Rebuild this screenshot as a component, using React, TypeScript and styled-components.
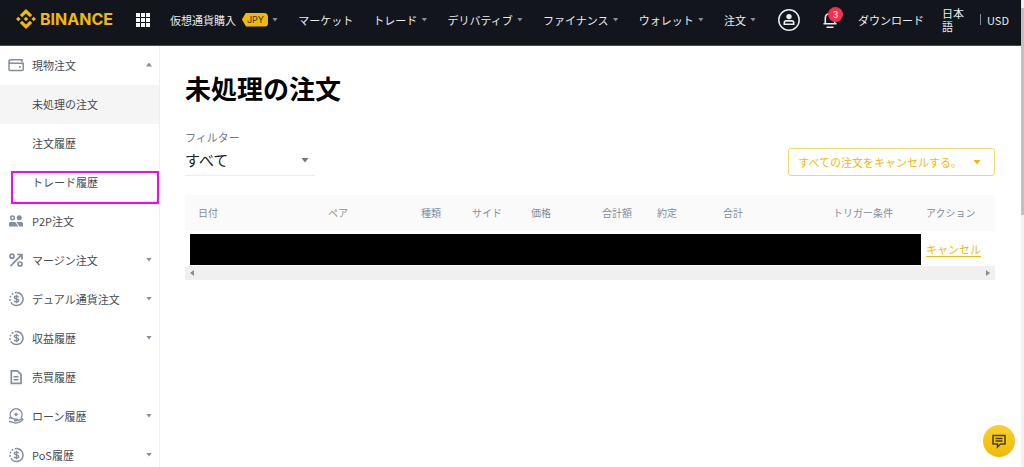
import React from "react";
import styled, { createGlobalStyle, css } from "styled-components";

const GlobalStyle = createGlobalStyle`
  *, *::before, *::after { box-sizing: border-box; }
  html, body, #root { height: 100%; }
  body {
    margin: 0;
    overflow: hidden;
    background: #fff;
    color: #474d57;
    font: 400 11px/16px "Noto Sans CJK JP", "Noto Sans", sans-serif;
  }
  button, select { font: inherit; }
  a { color: inherit; text-decoration: none; }
`;

const Window = styled.div`
  display: flex;
  height: 100%;
`;

const Page = styled.div`
  flex: 1;
  min-width: 0;
  display: flex;
  flex-direction: column;
  overflow: hidden;
`;

const ScrollTrack = styled.div`
  width: 3px;
  padding-top: 8px;
  background: #f1f1f1;
`;

const ScrollThumb = styled.div`
  height: 45%;
  background: #c1c1c1;
`;

const Header = styled.header`
  flex: none;
  display: flex;
  align-items: center;
  height: 46px;
  padding: 0 12px 6px 16px;
  background: #12161c;
  border-bottom: 1px solid #4a4d52;
  color: #eaecef;
`;

const Brand = styled.a`
  display: flex;
  align-items: center;
  gap: 4px;
  padding-bottom: 2px;
  color: #f0b90b;
  font: 700 16px/20px Inter, sans-serif;
`;

const IconButton = styled.button`
  position: relative;
  display: flex;
  padding: 0;
  border: 0;
  background: none;
  color: inherit;
  cursor: pointer;
`;

const AppsButton = styled(IconButton)`
  margin: 0 20px 0 23px;
`;

const Nav = styled.nav`
  flex: 1;
  display: flex;
  justify-content: space-between;
`;

const NavLink = styled.a`
  display: flex;
  align-items: center;
  gap: 4px;
  white-space: nowrap;
`;

const Currency = styled.span`
  margin-left: 2px;
  padding: 0 4px 0 5px;
  border-radius: 4px;
  background: #f0b90b;
  clip-path: polygon(0 50%, 4px 0, 100% 0, 100% 100%, 4px 100%);
  color: #3c3520;
  font: 400 9px/14px Inter, sans-serif;
`;

const Caret = styled.i<{ $up?: boolean; $size?: number; $color?: string }>`
  flex: none;
  width: ${(p) => (p.$size ?? 3) * 2}px;
  height: ${(p) => (p.$size ?? 3) + 1}px;
  background: ${(p) => p.$color ?? "#848e9c"};
  clip-path: ${(p) =>
    p.$up ? "polygon(0 100%, 50% 0, 100% 100%)" : "polygon(0 0, 100% 0, 50% 100%)"};
`;

const Tools = styled.div`
  display: flex;
  align-items: center;
  margin-left: 22px;
`;

const BellButton = styled(IconButton)`
  margin: 0 20px 0 22px;
`;

const Badge = styled.span`
  position: absolute;
  top: -5px;
  right: -5px;
  width: 15px;
  height: 15px;
  border-radius: 50%;
  background: #f6304e;
  color: #fff;
  font: 400 9px/15px Inter, sans-serif;
  text-align: center;
`;

const Language = styled.a`
  width: 24px;
  margin: 0 14px 0 18px;
  line-height: 13px;
`;

const CurrencyLink = styled.a`
  padding-left: 7px;
  background: linear-gradient(#848e9c, #848e9c) left center / 1px 11px no-repeat;
  line-height: 16px;
`;

const Body = styled.div`
  flex: 1;
  display: flex;
  min-height: 0;
`;

const Sidebar = styled.aside`
  flex: none;
  width: 160px;
  border-right: 1px solid #eeeff1;
`;

const Menu = styled.ul`
  margin: 0;
  padding: 0;
  list-style: none;
`;

const MenuItem = styled.li<{ $active?: boolean; $marked?: boolean }>`
  position: relative;
  background: ${(p) => (p.$active ? "#f5f5f5" : "transparent")};
  ${(p) =>
    p.$marked &&
    css`
      &::after {
        content: "";
        position: absolute;
        inset: 8px 0 -2px 11px;
        border: 2px solid #ff00ff;
        pointer-events: none;
      }
    `}
`;

const MenuLink = styled.a`
  display: flex;
  align-items: center;
  height: 39px;
  padding: 0 7px 2px 8px;
`;

const MenuIcon = styled.span`
  display: flex;
  width: 24px;
  color: #848e9c;
`;

const MenuText = styled.span`
  flex: 1;
  white-space: nowrap;
`;

const Main = styled.main`
  flex: 1;
  min-width: 0;
  padding: 23px 26px 0 25px;
`;

const Title = styled.h1`
  margin: 0;
  color: #000;
  font-size: 26px;
  font-weight: 700;
  line-height: 38px;
`;

const Toolbar = styled.div`
  display: flex;
  justify-content: space-between;
  align-items: flex-end;
  margin: 22px 0 19px;
`;

const Filter = styled.label`
  width: 130px;
  color: #707a8a;
`;

const SelectBox = styled.span`
  display: flex;
  align-items: center;
  padding-right: 6px;
  border-bottom: 1px solid #eaecef;
`;

const Select = styled.select`
  flex: 1;
  appearance: none;
  height: 30px;
  margin-right: -14px;
  padding: 0 14px 0 0;
  border: 0;
  background: none;
  color: #1e2026;
  font-size: 15px;
`;

const CancelAll = styled.button`
  display: flex;
  align-items: center;
  gap: 11px;
  height: 28px;
  padding: 0 13px 0 9px;
  border: 1px solid #f8d56e;
  border-radius: 3px;
  background: #fff;
  color: #f0b90b;
`;

const Orders = styled.table`
  width: 100%;
  table-layout: fixed;
  border-collapse: collapse;
`;

const HeadCell = styled.th`
  height: 36px;
  padding: 0 0 0 13px;
  background: #fafafa;
  color: #848e9c;
  font-size: 10px;
  font-weight: 400;
  text-align: left;
  white-space: nowrap;
`;

const MaskedCell = styled.td`
  padding: 3px 0 1px 5px;
`;

const Mask = styled.div`
  height: 31px;
  margin-right: -8px;
  background: #000;
`;

const ActionCell = styled.td`
  padding: 0 0 0 13px;
`;

const CancelLink = styled.a`
  color: #f0b90b;
  text-decoration: underline;
  text-underline-offset: 2px;
`;

const HorizontalScroll = styled.div`
  display: flex;
  justify-content: space-between;
  align-items: center;
  height: 14px;
  padding: 0 5px;
  background: #f0f0f0;
`;

const ScrollArrow = styled.i<{ $right?: boolean }>`
  width: 4px;
  height: 6px;
  background: #8c8c8c;
  clip-path: ${(p) =>
    p.$right ? "polygon(0 0, 100% 50%, 0 100%)" : "polygon(100% 0, 0 50%, 100% 100%)"};
`;

const ChatButton = styled.button`
  position: fixed;
  right: 9px;
  bottom: 10px;
  display: flex;
  align-items: center;
  justify-content: center;
  width: 32px;
  height: 32px;
  padding: 0;
  border: 0;
  border-radius: 50%;
  background: linear-gradient(#f8d12f, #f0b90b);
  color: #4b3d12;
`;

const icons = {
  wallet: (
    <g fill="none" stroke="currentColor" strokeWidth="1.500">
      <path d="M14 5V2.700H3C1.700 2.700 1 3.300 1 4.200V12.500c0 .6.400 1 1 1h12.200c.6 0 1-.4 1-1V6.300H2.500C1.500 6.300 1 5.500 1 4.500" />
      <path d="M11 9.800h1.700" strokeWidth="1.700" />
    </g>
  ),
  people: (
    <g fill="currentColor">
      <circle cx="4.500" cy="4.800" r="1.900" fill="none" stroke="currentColor" strokeWidth="1.500" />
      <circle cx="11.300" cy="4.800" r="2.500" />
      <path d="M1 13.500v-3C1 9.500 1.700 9 2.500 9h4.800l3 4.500z" />
      <path d="M8.500 9h4.700c1.100 0 1.800.6 1.800 1.600v2.900h-3.500z" />
    </g>
  ),
  margin: (
    <g fill="none" stroke="currentColor" strokeWidth="1.700">
      <circle cx="4" cy="4.200" r="2" />
      <circle cx="12" cy="12" r="2" />
      <path d="M2.500 14.200L13.500 2.800M9.200 2.500H14v5" />
    </g>
  ),
  coin: (
    <g fill="none" stroke="currentColor" strokeWidth="1.500">
      <path d="M8.500 1.500a6.500 6.500 0 1 1-4.500 11.200" />
      <path d="M4 12.700A6.500 6.500 0 0 1 8.500 1.500" strokeDasharray="1.700 1.700" />
      <path d="M10.700 6.200C10.300 5.300 9.500 5.100 8.500 5.100c-1.300 0-2.200.5-2.200 1.400C6.300 8.600 10.700 7.200 10.700 9.500c0 .9-.9 1.400-2.200 1.400-1.100 0-2-.3-2.300-1.200M8.500 3.800v8.400" strokeWidth="1.400" />
    </g>
  ),
  document: (
    <g fill="none" stroke="currentColor" strokeWidth="1.700">
      <path d="M3.300 1.800h6.200l3.500 3.500v9H3.300z" />
      <path d="M5.500 7.800h5M5.500 10.800h5" strokeWidth="1.400" />
    </g>
  ),
  loan: (
    <g fill="none" stroke="currentColor" strokeWidth="1.400">
      <path d="M3.200 10a5.900 5.900 0 1 1 9.800 0" />
      <path d="M8 4.400L10 6.400 8 8.400 6 6.400z" fill="currentColor" stroke="none" />
      <path d="M1 10h2.500c1.500 0 2.200 1.300 4 1.300h1.300c.9 0 .9 1.500 0 1.500H6M9.800 12.600l3.800-1.800c1.200-.3 1.600.9.800 1.500-1.800 1.500-3.800 2.800-6.400 2.800-2.800 0-3.500-1.600-7-1.600" />
    </g>
  ),
};

type IconName = keyof typeof icons;

function Icon({ name }: { name: IconName }) {
  return (
    <svg width="16" height="16" viewBox="0 0 16 16" aria-hidden="true">
      {icons[name]}
    </svg>
  );
}

const navItems: { label: string; tag?: string; caret: boolean }[] = [
  { label: "仮想通貨購入", tag: "JPY", caret: true },
  { label: "マーケット", caret: false },
  { label: "トレード", caret: true },
  { label: "デリバティブ", caret: true },
  { label: "ファイナンス", caret: true },
  { label: "ウォレット", caret: true },
  { label: "注文", caret: true },
];

const menuItems: {
  label: string;
  icon?: IconName;
  caret?: "up" | "down";
  active?: boolean;
  marked?: boolean;
}[] = [
  { label: "現物注文", icon: "wallet", caret: "up" },
  { label: "未処理の注文", active: true },
  { label: "注文履歴" },
  { label: "トレード履歴", marked: true },
  { label: "P2P注文", icon: "people" },
  { label: "マージン注文", icon: "margin", caret: "down" },
  { label: "デュアル通貨注文", icon: "coin", caret: "down" },
  { label: "収益履歴", icon: "coin", caret: "down" },
  { label: "売買履歴", icon: "document" },
  { label: "ローン履歴", icon: "loan", caret: "down" },
  { label: "PoS履歴", icon: "coin", caret: "down" },
];

const columns: [string, number][] = [
  ["日付", 130],
  ["ペア", 93],
  ["種類", 51],
  ["サイド", 59],
  ["価格", 71],
  ["合計額", 55],
  ["約定", 66],
  ["合計", 110],
  ["トリガー条件", 93],
  ["アクション", 82],
];

function TopBar() {
  return (
    <Header>
      <Brand href="#">
        <svg width="20" height="20" viewBox="0 0 20 20" fill="#f0b90b" aria-hidden="true">
          <path d="M6.100 8.300L10 4.400l3.900 3.900 2.300-2.300L10 0 3.800 6zM0 10l2.300-2.300L4.600 10l-2.300 2.300zM6.100 11.700L10 15.600l3.900-3.900 2.300 2.300L10 20l-6.200-6zM15.400 10l2.300-2.300L20 10l-2.300 2.300zM10 7.700l2.300 2.300-2.300 2.300L7.700 10z" />
        </svg>
        BINANCE
      </Brand>
      <AppsButton aria-label="アプリ">
        <svg width="14" height="14" viewBox="0 0 14 14" fill="#fff">
          {[0, 5, 10].map((y) =>
            [0, 5, 10].map((x) => <rect key={`${x}-${y}`} x={x} y={y} width="4" height="4" />)
          )}
        </svg>
      </AppsButton>
      <Nav>
        {navItems.map((item) => (
          <NavLink key={item.label} href="#">
            {item.label}
            {item.tag && <Currency>{item.tag}</Currency>}
            {item.caret && <Caret />}
          </NavLink>
        ))}
      </Nav>
      <Tools>
        <IconButton aria-label="アカウント">
          <svg width="22" height="22" viewBox="0 0 22 22" fill="none" stroke="#eaecef">
            <circle cx="11" cy="11" r="10.200" strokeWidth="1.500" />
            <circle cx="11" cy="7.600" r="2.700" fill="#eaecef" stroke="none" />
            <path d="M6.300 15.300v-1.500c0-1.200.9-1.900 2-1.900h5.400c1.100 0 2 .7 2 1.900v1.500z" strokeWidth="1.600" />
          </svg>
        </IconButton>
        <BellButton aria-label="通知">
          <svg width="16" height="16" viewBox="0 0 16 16" fill="none" stroke="#eaecef" strokeWidth="1.600">
            <path d="M1.500 11.800h13M3.300 11.500V6.500C3.300 3.500 5 1.500 8 1.500s4.700 2 4.700 5v5M4.500 15.200h7" />
          </svg>
          <Badge>3</Badge>
        </BellButton>
        <a href="#">ダウンロード</a>
        <Language href="#">日本語</Language>
        <CurrencyLink href="#">USD</CurrencyLink>
      </Tools>
    </Header>
  );
}

function OrderTable() {
  return (
    <>
      <Orders>
        <colgroup>
          {columns.map(([label, width]) => (
            <col key={label} width={width} />
          ))}
        </colgroup>
        <thead>
          <tr>
            {columns.map(([label]) => (
              <HeadCell key={label} scope="col">
                {label}
              </HeadCell>
            ))}
          </tr>
        </thead>
        <tbody>
          <tr>
            <MaskedCell colSpan={columns.length - 1}>
              <Mask />
            </MaskedCell>
            <ActionCell>
              <CancelLink href="#">キャンセル</CancelLink>
            </ActionCell>
          </tr>
        </tbody>
      </Orders>
      <HorizontalScroll>
        <ScrollArrow />
        <ScrollArrow $right />
      </HorizontalScroll>
    </>
  );
}

export default function App() {
  return (
    <Window>
      <GlobalStyle />
      <Page>
        <TopBar />
        <Body>
          <Sidebar>
            <Menu>
              {menuItems.map((item) => (
                <MenuItem key={item.label} $active={item.active} $marked={item.marked}>
                  <MenuLink href="#">
                    <MenuIcon>{item.icon && <Icon name={item.icon} />}</MenuIcon>
                    <MenuText>{item.label}</MenuText>
                    {item.caret && <Caret $up={item.caret === "up"} />}
                  </MenuLink>
                </MenuItem>
              ))}
            </Menu>
          </Sidebar>
          <Main>
            <Title>未処理の注文</Title>
            <Toolbar>
              <Filter>
                フィルター
                <SelectBox>
                  <Select defaultValue="all">
                    <option value="all">すべて</option>
                  </Select>
                  <Caret $size={4} $color="#707a8a" />
                </SelectBox>
              </Filter>
              <CancelAll>
                すべての注文をキャンセルする。
                <Caret $size={4} $color="#f0b90b" />
              </CancelAll>
            </Toolbar>
            <OrderTable />
          </Main>
        </Body>
      </Page>
      <ScrollTrack>
        <ScrollThumb />
      </ScrollTrack>
      <ChatButton aria-label="チャット">
        <svg width="16" height="16" viewBox="0 0 16 16" fill="none" stroke="currentColor" strokeWidth="1.500">
          <path d="M2 2.500h12v8.500H9.500L6.500 14v-3H2z" />
          <path d="M4.500 5.500h7M4.500 8h7" />
        </svg>
      </ChatButton>
    </Window>
  );
}
